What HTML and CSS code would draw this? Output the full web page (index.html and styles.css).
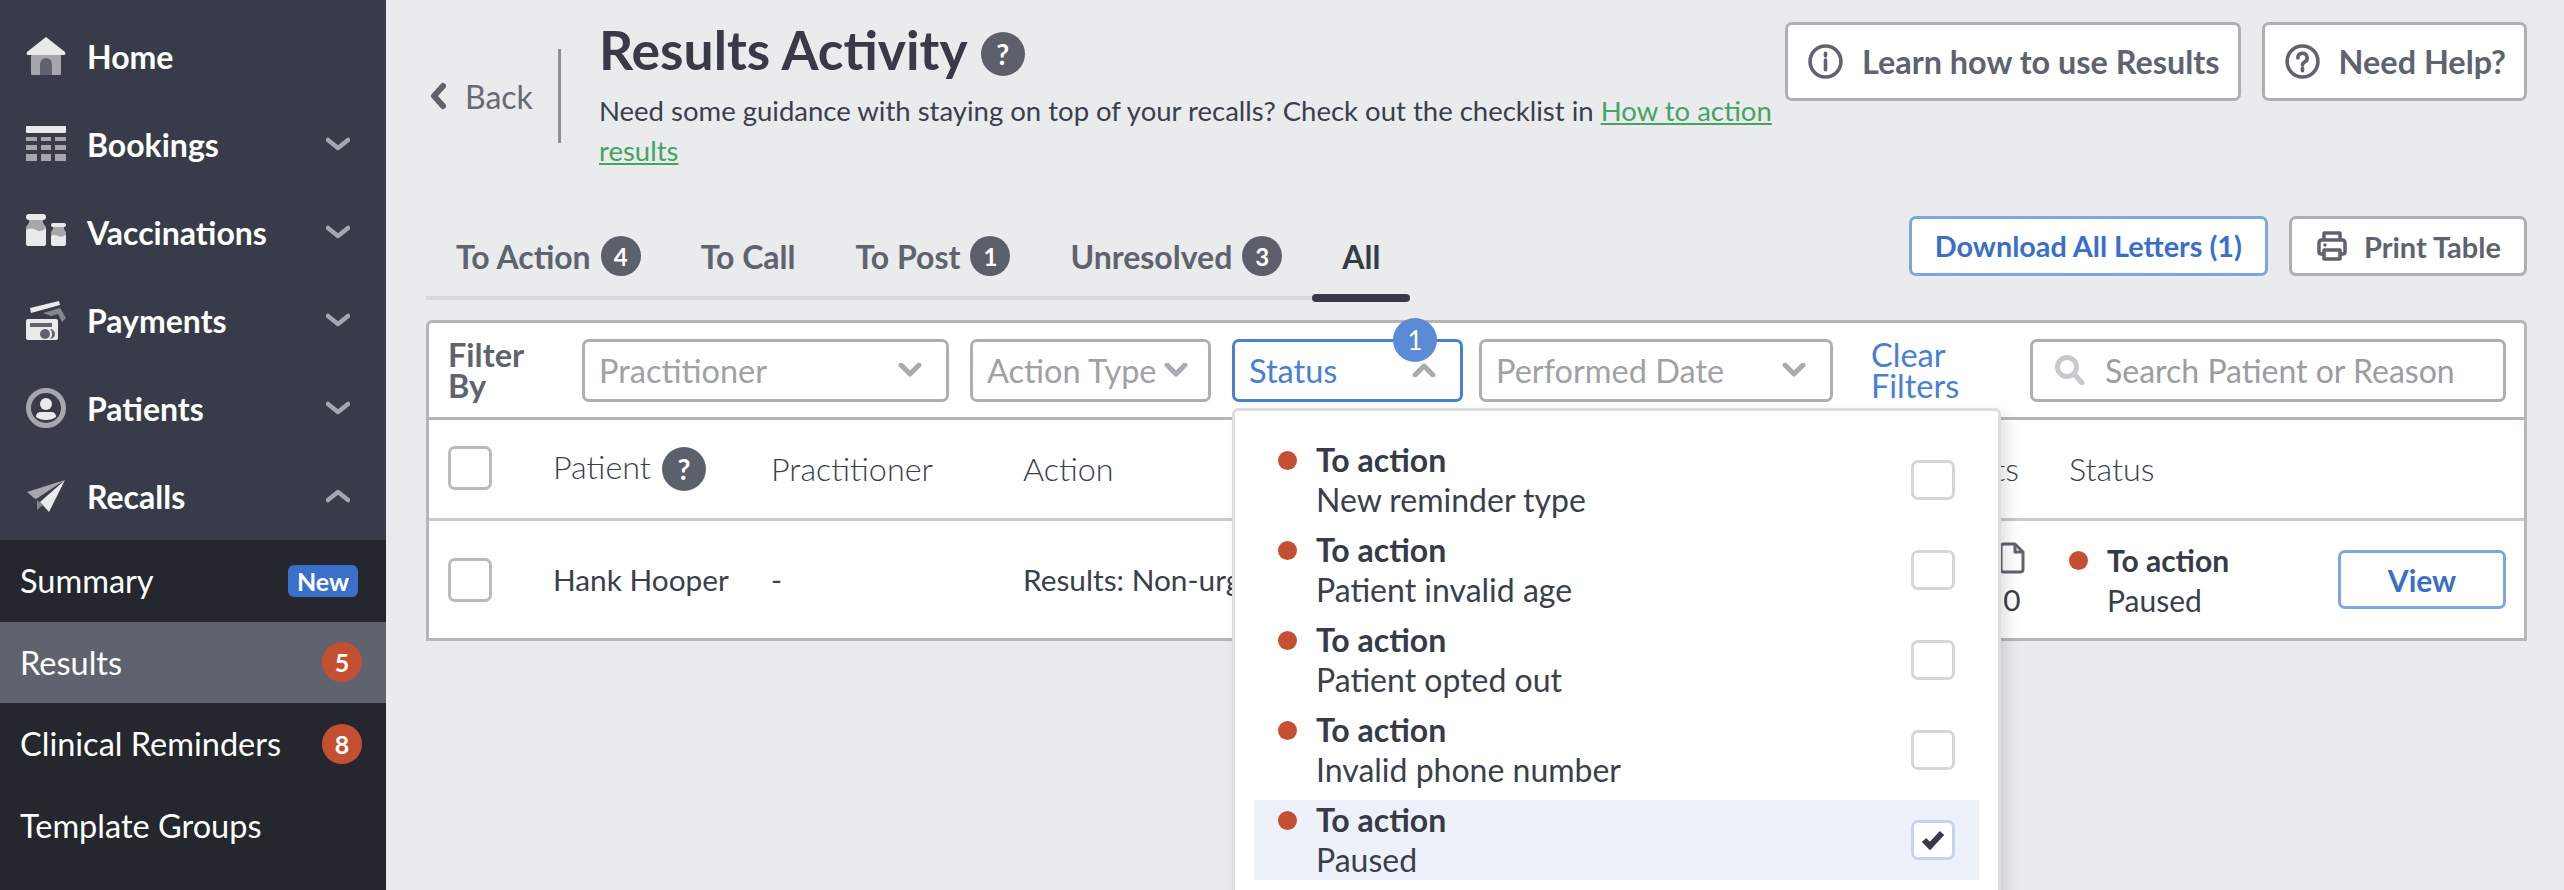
FILE: index.html
```html
<!DOCTYPE html>
<html lang="en">
<head>
<meta charset="utf-8">
<title>Results Activity</title>
<link rel="stylesheet" href="styles.css">
</head>
<body>
<div class="app">
  <nav class="sidebar">
    <ul class="nav">
      <li class="nav-item">
        <svg class="nav-icon" viewBox="0 0 40 40"><path class="ic-l" d="M20 1 L39 16 Q40 19 38 19 H2 Q0 19 1 16Z"/><rect class="ic-m" x="5" y="19" width="30" height="20" rx="1"/><path class="ic-d" d="M14 39 V28 a6 6 0 0 1 12 0 V39Z"/></svg>
        <span class="nav-label">Home</span>
      </li>
      <li class="nav-item">
        <svg class="nav-icon" viewBox="0 0 40 40"><rect class="ic-l" x="0" y="2" width="40" height="7" rx="1"/><path class="ic-m" d="M0 13h11v4H0zM15 13h10v4H15zM29 13h11v4H29zM0 21h11v5H0zM15 21h10v5H15zM29 21h11v5H29zM0 30h11v7H0zM15 30h10v7H15zM29 30h11v7H29z"/></svg>
        <span class="nav-label">Bookings</span>
        <svg class="nav-chev" viewBox="0 0 24 14"><path d="M2 3 L12 11 L22 3"/></svg>
      </li>
      <li class="nav-item">
        <svg class="nav-icon" viewBox="0 0 40 40"><rect class="ic-l" x="0" y="2" width="20" height="6" rx="3"/><path class="ic-m" d="M3 8h14v3l3 4v8H0v-8l3-4z"/><path class="ic-l" d="M0 18q5-3 10 0t10-2v16q0 2-2 2H2q-2 0-2-2z"/><rect class="ic-l" x="25" y="11" width="15" height="4" rx="2"/><path class="ic-m" d="M27 15h11v2l2 3v6H25v-6l2-3z"/><path class="ic-l" d="M25 24q4-2 7 0t8-1v9q0 2-2 2H27q-2 0-2-2z"/></svg>
        <span class="nav-label">Vaccinations</span>
        <svg class="nav-chev" viewBox="0 0 24 14"><path d="M2 3 L12 11 L22 3"/></svg>
      </li>
      <li class="nav-item">
        <svg class="nav-icon" viewBox="0 0 40 40"><path class="ic-l" d="M4 8 L33 1 L34 5 L5 13Z"/><path class="ic-d2" d="M17 13 L34 8 L40 18 L36 22 L32 14 L25 16Z"/><rect class="ic-l" x="0" y="19" width="32" height="21" rx="2"/><rect class="ic-d" x="4" y="23" width="22" height="4"/><circle class="ic-d" cx="19" cy="34" r="5"/><path class="ic-d" d="M24 29 a5 5 0 0 1 0 10 a7 7 0 0 0 0 -10z"/></svg>
        <span class="nav-label">Payments</span>
        <svg class="nav-chev" viewBox="0 0 24 14"><path d="M2 3 L12 11 L22 3"/></svg>
      </li>
      <li class="nav-item">
        <svg class="nav-icon" viewBox="0 0 40 40"><circle class="ic-ring" cx="20" cy="20" r="17.5"/><circle class="ic-l" cx="20" cy="16" r="6"/><path class="ic-l" d="M10 29 Q10 24 15 24 H25 Q30 24 30 29 Q26 32 20 32 Q14 32 10 29Z"/></svg>
        <span class="nav-label">Patients</span>
        <svg class="nav-chev" viewBox="0 0 24 14"><path d="M2 3 L12 11 L22 3"/></svg>
      </li>
      <li class="nav-item">
        <svg class="nav-icon" viewBox="0 0 40 40"><path class="ic-m" d="M1 16 L39 4 L10 23 L8 22Z"/><path class="ic-l" d="M39 4 L23 36 L14 26Z"/><path class="ic-d2" d="M11 24 L11 34 L17 29Z"/></svg>
        <span class="nav-label">Recalls</span>
        <svg class="nav-chev" viewBox="0 0 24 14"><path d="M2 11 L12 3 L22 11"/></svg>
      </li>
    </ul>
    <ul class="subnav">
      <li class="sub-item"><span>Summary</span><span class="tag-new">New</span></li>
      <li class="sub-item sub-active"><span>Results</span><span class="count-red">5</span></li>
      <li class="sub-item"><span>Clinical Reminders</span><span class="count-red">8</span></li>
      <li class="sub-item"><span>Template Groups</span></li>
    </ul>
  </nav>

  <main class="main">
    <header class="page-head">
      <a class="back">
        <svg class="back-chev" viewBox="0 0 18 28"><path d="M14 4 L5 14 L14 24"/></svg>
        <span>Back</span>
      </a>
      <div class="head-text">
        <h1 class="title">Results Activity <span class="help-dot help-dot-lg">?</span></h1>
        <p class="intro">Need some guidance with staying on top of your recalls? Check out the checklist in <a class="link-green">How to action results</a></p>
      </div>
      <div class="head-actions">
        <button class="btn">
          <svg class="btn-icon" viewBox="0 0 34 34"><circle cx="17" cy="17" r="15"/><path d="M17 15.5 V25"/><path d="M17 9 V11.5"/></svg>
          Learn how to use Results
        </button>
        <button class="btn">
          <svg class="btn-icon" viewBox="0 0 34 34"><circle cx="17" cy="17" r="15"/><path d="M12.5 13.5 a4.5 4.5 0 1 1 6.5 4 q-2 1 -2 3"/><path d="M17 23.5 V26"/></svg>
          Need Help?
        </button>
      </div>
    </header>

    <div class="toolbar">
      <div class="tabs">
        <a class="tab">To Action <span class="count-grey">4</span></a>
        <a class="tab">To Call</a>
        <a class="tab">To Post <span class="count-grey">1</span></a>
        <a class="tab">Unresolved <span class="count-grey">3</span></a>
        <a class="tab tab-active">All</a>
      </div>
      <div class="tool-actions">
        <button class="btn-sm btn-blue">Download All Letters (1)</button>
        <button class="btn-sm btn-print">
          <svg class="print-icon" viewBox="0 0 30 30"><path d="M7 9 V2 H23 V9"/><path d="M7 23 H4 Q2 23 2 21 V12 Q2 9 5 9 H25 Q28 9 28 12 V21 Q28 23 26 23 H23"/><path d="M7 19 H23 V28 H7Z"/><circle class="print-dot" cx="8" cy="14" r="1.7"/></svg>
          Print Table
        </button>
      </div>
    </div>

    <section class="panel">
      <div class="filters">
        <div class="filter-label">Filter<br>By</div>
        <div class="select select-practitioner"><span>Practitioner</span><svg class="select-chev" viewBox="0 0 24 14"><path d="M3 2 L12 11 L21 2"/></svg></div>
        <div class="select select-action"><span>Action Type</span><svg class="select-chev" viewBox="0 0 24 14"><path d="M3 2 L12 11 L21 2"/></svg></div>
        <div class="status-wrap">
          <div class="select select-status"><span>Status</span><svg class="select-chev" viewBox="0 0 24 14"><path d="M3 12 L12 3 L21 12"/></svg></div>
          <span class="filter-count">1</span>
          <div class="dropdown">
            <div class="dd-item"><span class="dot"></span><div class="dd-text"><b>To action</b><span>New reminder type</span></div><span class="check check-dd"></span></div>
            <div class="dd-item"><span class="dot"></span><div class="dd-text"><b>To action</b><span>Patient invalid age</span></div><span class="check check-dd"></span></div>
            <div class="dd-item"><span class="dot"></span><div class="dd-text"><b>To action</b><span>Patient opted out</span></div><span class="check check-dd"></span></div>
            <div class="dd-item"><span class="dot"></span><div class="dd-text"><b>To action</b><span>Invalid phone number</span></div><span class="check check-dd"></span></div>
            <div class="dd-item dd-selected"><span class="dot"></span><div class="dd-text"><b>To action</b><span>Paused</span></div><span class="check check-dd check-on"><svg viewBox="0 0 24 20"><path d="M3 10 L9 16 L21 3"/></svg></span></div>
          </div>
        </div>
        <div class="select select-date"><span>Performed Date</span><svg class="select-chev" viewBox="0 0 24 14"><path d="M3 2 L12 11 L21 2"/></svg></div>
        <a class="clear">Clear<br>Filters</a>
        <div class="search">
          <svg class="search-icon" viewBox="0 0 30 30"><circle cx="12" cy="12" r="9.5"/><path d="M19 19 L27 28"/></svg>
          <span>Search Patient or Reason</span>
        </div>
      </div>
      <div class="grid grid-head">
        <div><span class="check"></span></div>
        <div class="patient-head"><span class="patient-label">Patient</span> <span class="help-dot">?</span></div>
        <div>Practitioner</div>
        <div>Action</div>
        <div class="cell-end">Attachments</div>
        <div>Status</div>
      </div>
      <div class="grid grid-row">
        <div><span class="check"></span></div>
        <div>Hank Hooper</div>
        <div>-</div>
        <div>Results: Non-urgent</div>
        <div class="cell-files">
          <svg class="file-icon" viewBox="0 0 26 32"><path d="M5 2 H16 L24 10 V27 Q24 30 21 30 H5 Q2 30 2 27 V5 Q2 2 5 2Z"/><path d="M16 2 V10 H24"/></svg>
          <span>0</span>
        </div>
        <div class="cell-status">
          <div class="status-block"><span class="dot"></span><div class="dd-text dd-text-row"><b>To action</b><span>Paused</span></div></div>
          <button class="btn-view">View</button>
        </div>
      </div>
    </section>
  </main>
</div>
</body>
</html>
```
FILE: styles.css
```css
* { box-sizing: border-box; }
html, body { margin: 0; height: 890px; overflow: hidden; }
body { font-family: Lato, "Open Sans", sans-serif; color: #3a3f4b; background: #eaebed; }
ul { list-style: none; margin: 0; padding: 0; }
button { font-family: inherit; cursor: pointer; }

.app { display: flex; height: 890px; }

/* Sidebar */
.sidebar { width: 386px; flex: none; background: #25272e; display: flex; flex-direction: column; color: #fff; }
.nav { background: #383c48; height: 540px; padding-top: 12px; overflow: hidden; }
.nav-item { height: 88px; display: flex; align-items: center; padding: 0 36px 0 26px; }
.nav-icon { width: 40px; height: 40px; flex: none; }
.nav-label { margin-left: 21px; font-size: 32px; font-weight: 700; flex: 1; }
.nav-chev { width: 24px; height: 14px; fill: none; stroke: #a5a7ad; stroke-width: 4.5; stroke-linecap: round; stroke-linejoin: round; }
.ic-l { fill: #e9eaec; }
.ic-m { fill: #a5a7ad; }
.ic-d { fill: #5f636e; }
.ic-d2 { fill: #83868e; }
.ic-ring { fill: none; stroke: #a5a7ad; stroke-width: 5; }

.subnav { flex: 1; }
.sub-item { height: 81.5px; display: flex; align-items: center; justify-content: space-between; padding: 0 24px 0 20px; font-size: 32.5px; }
.sub-active { background: #5f636e; }
.tag-new { width: 70px; height: 32px; margin-right: 4px; border-radius: 6px; background: #3a70c9; font-size: 25px; font-weight: 700; display: flex; align-items: center; justify-content: center; }
.count-red { width: 40px; height: 40px; border-radius: 50%; background: #c44f33; font-size: 25px; font-weight: 700; display: flex; align-items: center; justify-content: center; }

/* Main */
.main { flex: 1; min-width: 0; padding: 0 37px 0 40px; }
.page-head { height: 216px; display: flex; align-items: flex-start; }
.back { width: 135px; height: 94px; margin-top: 49px; border-right: 3px solid #8d8f96; display: flex; align-items: center; padding-left: 3px; font-size: 32px; color: #666a74; flex: none; }
.back-chev { width: 18px; height: 28px; margin-right: 18px; fill: none; stroke: #5f636e; stroke-width: 6; stroke-linecap: round; stroke-linejoin: round; }
.head-text { width: 1211px; padding-left: 38px; flex: none; }
.title { margin: 16px 0 0; font-size: 53.4px; line-height: 66px; font-weight: 700; color: #363b47; display: flex; align-items: center; gap: 13px; }
.intro { margin: 9px 0 0; font-size: 27.5px; line-height: 40px; color: #3a3f4b; }
.link-green { color: #47a264; text-decoration: underline; }
.help-dot { display: inline-flex; align-items: center; justify-content: center; width: 44px; height: 44px; border-radius: 50%; background: #5c606b; color: #fff; font-size: 28px; font-weight: 700; }
.help-dot-lg { margin-top: 10px; }

.head-actions { display: flex; gap: 21px; margin-top: 22px; margin-left: auto; }
.btn { height: 79px; padding: 0 18px 0 20px; display: flex; align-items: center; gap: 19px; background: #fff; border: 3px solid #aeafb4; border-radius: 7px; color: #5f636e; font-size: 32.4px; font-weight: 700; white-space: nowrap; }
.btn-icon { width: 35px; height: 35px; flex: none; fill: none; stroke: #5f636e; stroke-width: 3.5; stroke-linecap: round; }

.toolbar { display: flex; justify-content: space-between; align-items: flex-start; height: 104px; }
.tabs { display: flex; height: 84px; align-items: stretch; border-bottom: 4px solid #d8d9db; }
.tab { position: relative; display: flex; align-items: center; gap: 10px; padding: 0 30px; height: 80px; font-size: 32px; font-weight: 700; color: #5f636e; white-space: nowrap; }
.tab-active { color: #363b47; }
.tab-active::after { content: ""; position: absolute; left: 0; right: 0; bottom: -6px; height: 8px; border-radius: 4px; background: #363b47; }
.count-grey { width: 40px; height: 40px; border-radius: 50%; background: #5c606b; color: #fff; font-size: 24px; font-weight: 700; display: flex; align-items: center; justify-content: center; }
.tool-actions { display: flex; gap: 21px; }
.btn-sm { height: 60px; display: flex; align-items: center; gap: 17px; padding: 0 22px; background: #fff; border: 3px solid #aeafb4; border-radius: 7px; color: #5f636e; font-size: 29px; font-weight: 700; white-space: nowrap; }
.btn-print { padding: 0 23px 0 25px; }
.btn-blue { border-color: #7ea6de; color: #3a6fc9; font-size: 28.8px; padding: 0 23px; }
.print-icon { width: 30px; height: 30px; fill: none; stroke: #5f636e; stroke-width: 3.5; stroke-linejoin: round; }
.print-dot { fill: #5f636e; stroke: none; }

/* Panel */
.panel { background: #fff; border: 3px solid #b5b6ba; border-radius: 6px 6px 0 0; height: 321px; }
.filters { height: 97px; display: flex; align-items: center; border-bottom: 3px solid #b5b6ba; padding: 0 18px 0 19px; }
.filter-label { width: 134px; flex: none; font-size: 32.5px; line-height: 31px; font-weight: 700; color: #5f636e; }
.select { height: 63px; display: flex; align-items: center; justify-content: space-between; background: #fff; border: 3px solid #aeafb4; border-radius: 7px; padding: 0 24px 0 14px; font-size: 32.5px; color: #9fa1a5; flex: none; }
.select-chev { width: 24px; height: 14px; flex: none; fill: none; stroke: #a9abb0; stroke-width: 5; stroke-linecap: round; stroke-linejoin: round; }
.select-practitioner { width: 367px; margin-right: 21px; }
.select-action { width: 241px; margin-right: 21px; padding-right: 20px; white-space: nowrap; }
.status-wrap { position: relative; width: 231px; margin-right: 16px; flex: none; }
.select-status { width: 231px; border-color: #4a80d4; color: #4a80d4; }
.select-date { width: 354px; margin-right: 38px; }
.filter-count { position: absolute; left: 161px; top: -21px; width: 44px; height: 44px; border-radius: 50%; background: #5b8ad6; color: #fff; font-size: 26px; display: flex; align-items: center; justify-content: center; }
.clear { width: 159px; flex: none; font-size: 32.5px; line-height: 31px; color: #4a80d4; }
.search { width: 476px; height: 63px; border: 3px solid #aeafb4; border-radius: 7px; display: flex; align-items: center; padding-left: 22px; font-size: 32px; color: #9b9da1; flex: none; white-space: nowrap; }
.search-icon { width: 30px; height: 30px; margin-right: 20px; flex: none; fill: none; stroke: #c8c9cc; stroke-width: 5; stroke-linecap: round; }

/* Dropdown */
.dropdown { position: absolute; left: 0; top: 69px; width: 769px; height: 500px; padding: 29px 19px 0; background: #fff; border: 3px solid #dcdddf; border-radius: 6px; box-shadow: 6px 6px 14px rgba(0,0,0,.12); display: flex; flex-direction: column; gap: 10px; z-index: 5; }
.dd-item { height: 80px; flex: none; display: flex; align-items: flex-start; padding: 0 24px; }
.dd-selected { background: #edf2fa; }
.dot { width: 19px; height: 19px; flex: none; margin-top: 11px; border-radius: 50%; background: #c44f33; }
.dd-text { margin-left: 19px; display: flex; flex-direction: column; font-size: 32px; line-height: 40px; color: #3a3f4b; white-space: nowrap; }
.dd-text-row { font-size: 30px; }
.dd-text b { font-weight: 700; color: #363b47; }
.check { display: block; width: 44px; height: 44px; background: #fff; border: 3px solid #b9bbbf; border-radius: 7px; }
.check-dd { width: 44px; height: 40px; margin: 20px 0 0 auto; border-color: #d5d6d8; flex: none; }
.check-on { border-color: #c5d5ee; display: flex; align-items: center; justify-content: center; }
.check-on svg { width: 24px; height: 20px; fill: none; stroke: #363b47; stroke-width: 6; }

/* Table */
.grid { display: grid; grid-template-columns: 105px 218px 252px 777px 269px 1fr; align-items: center; padding: 0 18px 0 19px; }
.grid-head { height: 101px; padding-bottom: 2px; border-bottom: 3px solid #c9cacd; font-size: 32.3px; font-weight: 300; color: #3a3f4b; }
.grid-row { height: 117px; font-size: 29.8px; color: #3a3f4b; }
.patient-head { display: flex; align-items: center; gap: 11px; }
.patient-label { margin-bottom: 4px; }
.patient-head .help-dot { margin-top: 2px; }
.cell-end { text-align: right; padding-right: 50px; }
.cell-files { display: flex; flex-direction: column; align-items: center; justify-self: end; width: 26px; margin-right: 44px; gap: 8px; }
.file-icon { width: 26px; height: 32px; fill: none; stroke: #5f636e; stroke-width: 3; stroke-linejoin: round; }
.cell-status { display: flex; justify-content: space-between; align-items: center; }
.status-block { display: flex; align-items: flex-start; }
.btn-view { width: 168px; height: 59px; background: #fff; border: 3px solid #7ea6de; border-radius: 7px; color: #3a6fc9; font-size: 30px; font-weight: 700; }
```
